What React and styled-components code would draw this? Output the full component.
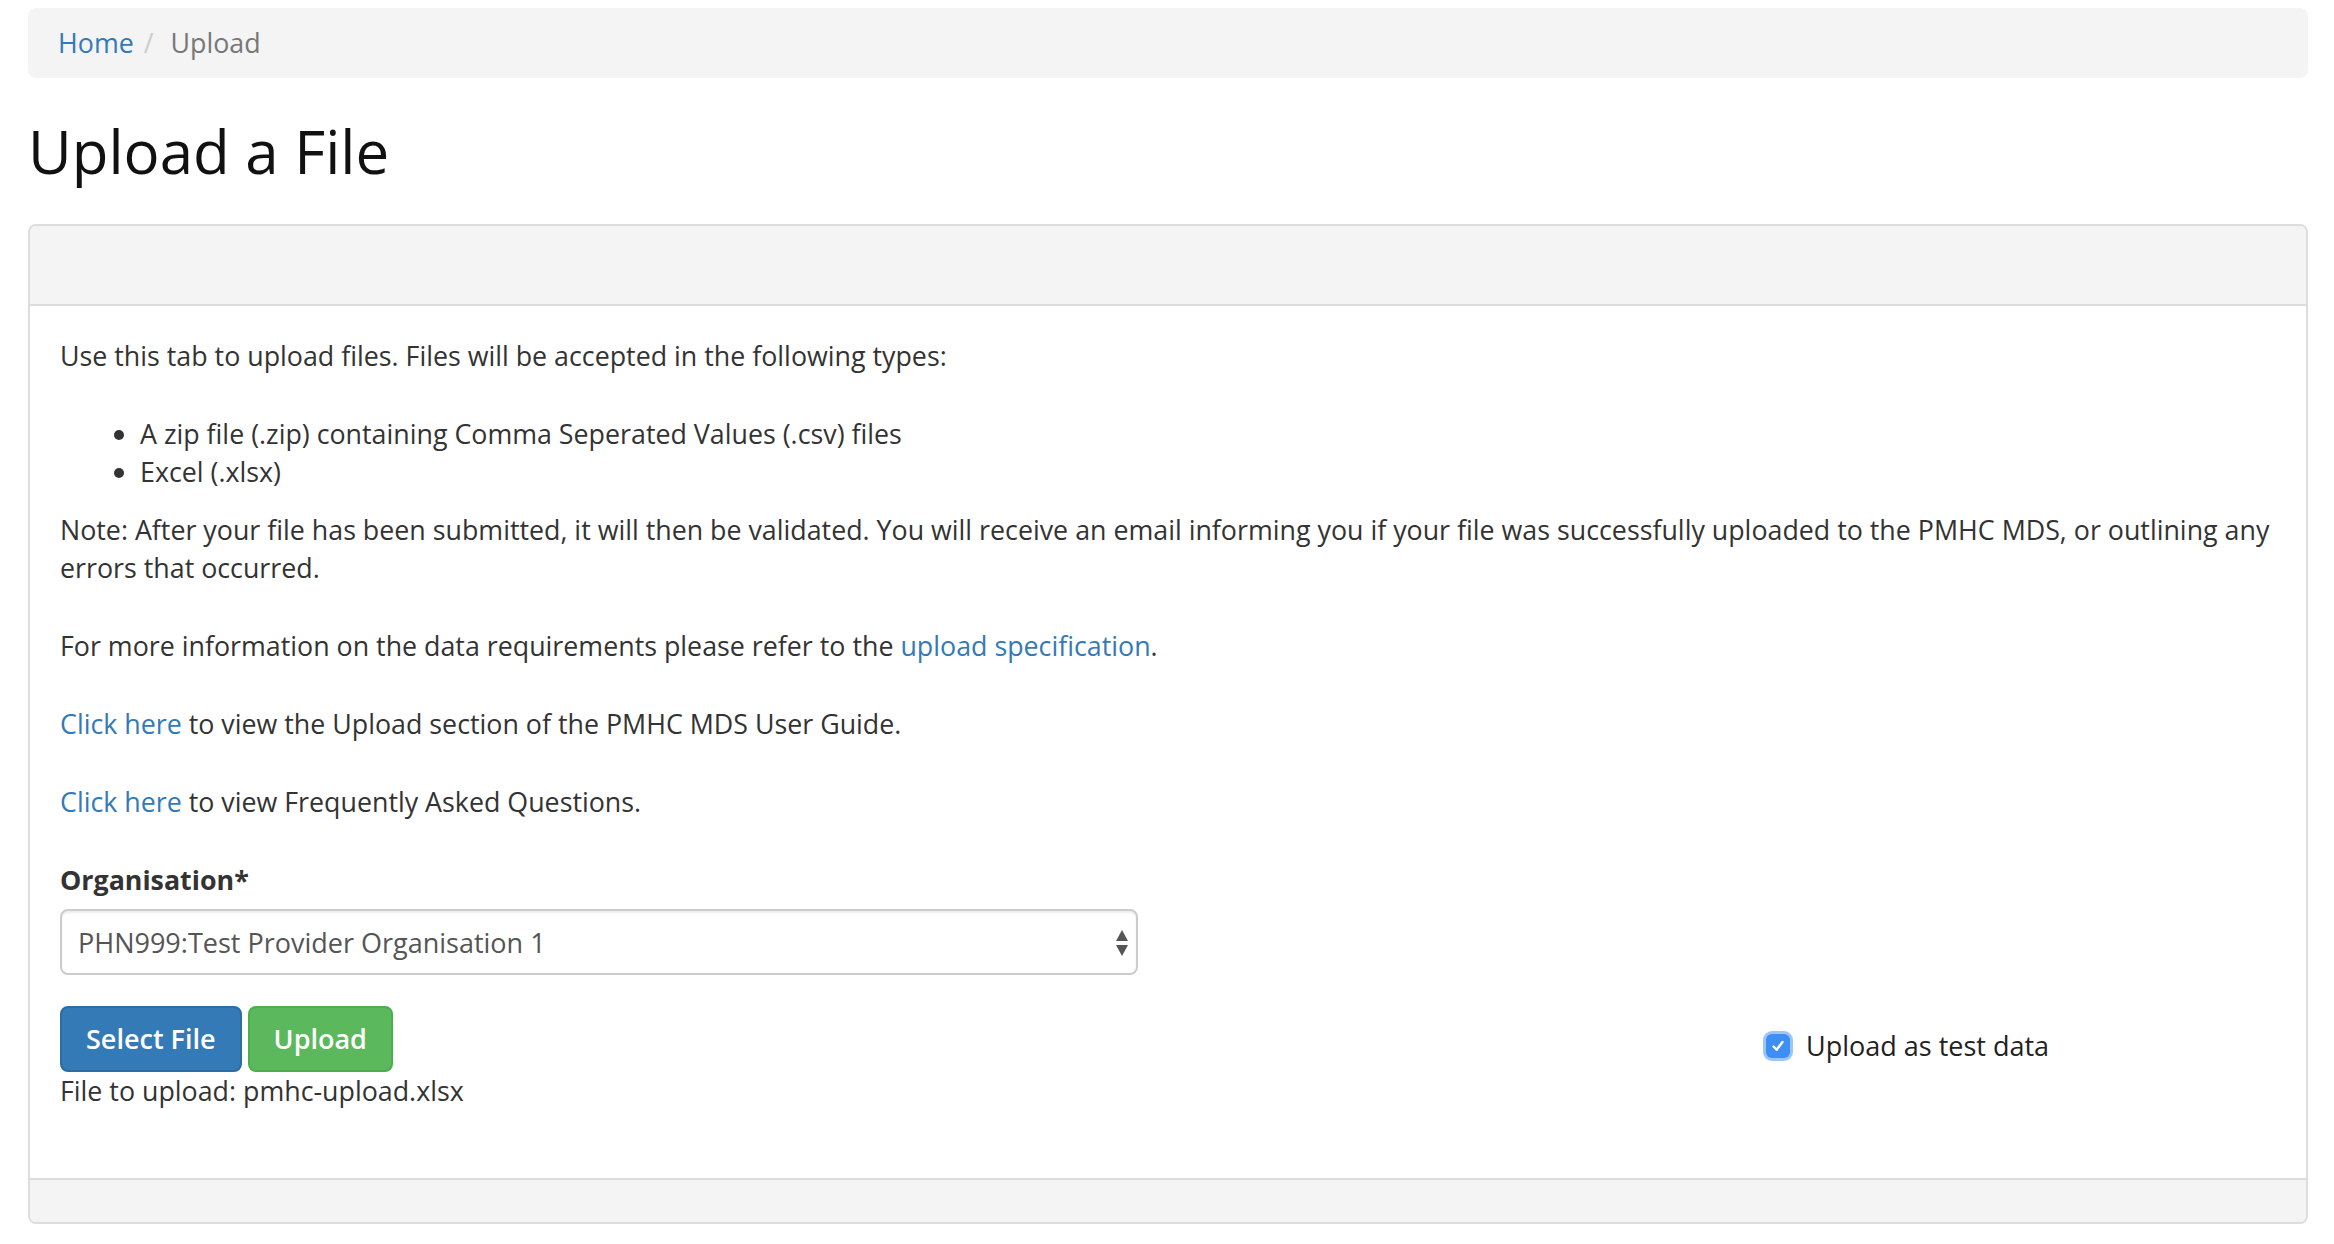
import React from 'react';
import styled, { createGlobalStyle } from 'styled-components';

const GlobalStyle = createGlobalStyle`
  html, body {
    margin: 0;
    padding: 0;
    background: #fff;
  }
  body {
    font-family: "Open Sans", "Liberation Sans", sans-serif;
    font-size: 26.8px;
    line-height: 38px;
    color: #333;
  }
  * {
    box-sizing: border-box;
  }
`;

const Page = styled.div`
  padding: 8px 26px 20px 28px;
`;

const Breadcrumb = styled.ol`
  display: flex;
  list-style: none;
  margin: 0 0 40px;
  padding: 16px 30px;
  background: #f4f4f4;
  border-radius: 8px;
`;

const Crumb = styled.li`
  color: ${(p) => (p.$active ? '#777' : '#337ab7')};

  &:not(:first-child)::before {
    content: '/\\00a0';
    padding: 0 10px;
    color: #ccc;
  }
`;

const Title = styled.h1`
  margin: 0 0 40px;
  font-size: 60px;
  line-height: 66px;
  font-weight: 400;
  color: #111;
`;

const Panel = styled.div`
  border: 2px solid #ddd;
  border-radius: 8px;
  overflow: hidden;
`;

const PanelHeading = styled.div`
  height: 80px;
  background: #f4f4f4;
  border-bottom: 2px solid #ddd;
`;

const PanelBody = styled.div`
  padding: 31px 30px 30px;
`;

const PanelFooter = styled.div`
  height: 44px;
  background: #f4f4f4;
  border-top: 2px solid #ddd;
`;

const Para = styled.p`
  margin: 0 0 ${(p) => p.$gap || 40}px;
`;

const List = styled.ul`
  margin: 0 0 20px;
  padding-left: 80px;
`;

const Link = styled.a`
  color: #337ab7;
  text-decoration: none;
`;

const HalfGrid = styled.div`
  display: grid;
  grid-template-columns: 1fr 1fr;
  column-gap: 60px;
  margin-bottom: 31px;
`;

const FieldLabel = styled.label`
  display: block;
  font-weight: 700;
  margin-bottom: 10px;
`;

const SelectWrap = styled.div`
  position: relative;
`;

const Select = styled.select`
  display: block;
  width: 100%;
  height: 66px;
  padding: 0 50px 0 16px;
  font-family: inherit;
  font-size: 27px;
  color: #555;
  background: #fff;
  border: 2px solid #ccc;
  border-radius: 8px;
  box-shadow: inset 0 2px 2px rgba(0, 0, 0, 0.075);
  appearance: none;
  outline: none;
`;

const Arrows = styled.svg`
  position: absolute;
  right: 9px;
  top: 20px;
  pointer-events: none;
`;

const ActionRow = styled.div`
  display: grid;
  grid-template-columns: minmax(0, 1fr) 509px;
  column-gap: 60px;
`;

const ButtonGroup = styled.div`
  display: flex;
  gap: 6px;
`;

const Button = styled.button`
  height: 66px;
  padding: 0 24px;
  font-family: inherit;
  font-size: 27px;
  font-weight: 600;
  line-height: 38px;
  color: #fff;
  background: ${(p) => (p.$variant === 'success' ? '#5cb85c' : '#337ab7')};
  border: 2px solid ${(p) => (p.$variant === 'success' ? '#4cae4c' : '#2e6da4')};
  border-radius: 8px;
  cursor: pointer;
`;

const FileName = styled.div`
  margin-bottom: 38px;
`;

const CheckLabel = styled.label`
  display: flex;
  align-items: center;
  margin-top: 21px;
  font-size: 27px;
  color: #222;
`;

const CheckBox = styled.span`
  display: inline-flex;
  align-items: center;
  justify-content: center;
  width: 24px;
  height: 24px;
  margin: 0 16px 0 -1px;
  border-radius: 6px;
  background: #3d8ef5;
  box-shadow: 0 0 0 3px #9cc6fa;
`;

const App = () => {
  return (
    <Page>
      <GlobalStyle />
      <Breadcrumb>
        <Crumb>Home</Crumb>
        <Crumb $active>Upload</Crumb>
      </Breadcrumb>

      <Title>Upload a File</Title>

      <Panel>
        <PanelHeading />
        <PanelBody>
          <Para>
            Use this tab to upload files. Files will be accepted in the following types:
          </Para>
          <List>
            <li>A zip file (.zip) containing Comma Seperated Values (.csv) files</li>
            <li>Excel (.xlsx)</li>
          </List>
          <Para>
            Note: After your file has been submitted, it will then be validated. You will
            receive an email informing you if your file was successfully uploaded to the PMHC
            MDS, or outlining any errors that occurred.
          </Para>
          <Para>
            For more information on the data requirements please refer to the{' '}
            <Link href="#">upload specification</Link>.
          </Para>
          <Para>
            <Link href="#">Click here</Link> to view the Upload section of the PMHC MDS User
            Guide.
          </Para>
          <Para>
            <Link href="#">Click here</Link> to view Frequently Asked Questions.
          </Para>

          <HalfGrid>
            <div>
              <FieldLabel>Organisation*</FieldLabel>
              <SelectWrap>
                <Select defaultValue="PHN999">
                  <option value="PHN999">PHN999:Test Provider Organisation 1</option>
                </Select>
                <Arrows width="14" height="28" viewBox="0 0 14 28">
                  <path d="M7 1 L13 12 L1 12 Z" fill="#555" />
                  <path d="M1 16 L13 16 L7 27 Z" fill="#555" />
                </Arrows>
              </SelectWrap>
            </div>
          </HalfGrid>

          <ActionRow>
            <div>
              <ButtonGroup>
                <Button>Select File</Button>
                <Button $variant="success">Upload</Button>
              </ButtonGroup>
              <FileName>File to upload: pmhc-upload.xlsx</FileName>
            </div>
            <div>
              <CheckLabel>
                <CheckBox>
                  <svg width="16" height="16" viewBox="0 0 16 16">
                    <path
                      d="M3.5 8.5 L6.6 11.8 L12.5 4"
                      fill="none"
                      stroke="#fff"
                      strokeWidth="2.4"
                      strokeLinecap="round"
                      strokeLinejoin="round"
                    />
                  </svg>
                </CheckBox>
                Upload as test data
              </CheckLabel>
            </div>
          </ActionRow>
        </PanelBody>
        <PanelFooter />
      </Panel>
    </Page>
  );
};

export default App;
